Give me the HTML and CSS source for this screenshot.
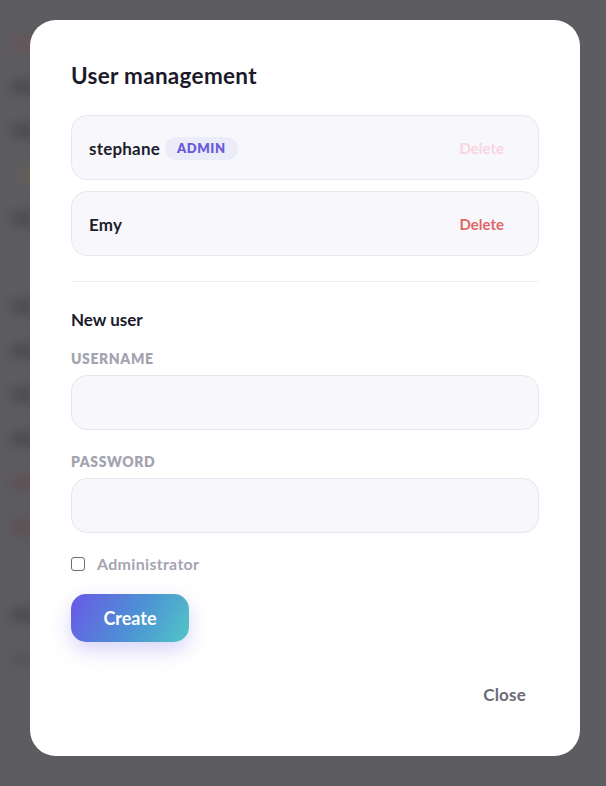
FILE: index.html
```html
<!DOCTYPE html>
<html>
<head>
<meta charset="utf-8">
<link rel="stylesheet" href="styles.css">
</head>
<body>
<div class="backdrop">
  <div class="bg-line bg-red"></div>
  <div class="bg-line bg-dark"></div>
  <div class="bg-line bg-short"></div>
  <div class="bg-line bg-amber"></div>
  <div class="bg-line bg-dark"></div>
  <div class="bg-line bg-gap"></div>
  <div class="bg-line bg-dark"></div>
  <div class="bg-line bg-dark"></div>
  <div class="bg-line bg-dark"></div>
  <div class="bg-line bg-dark"></div>
  <div class="bg-line bg-red2"></div>
  <div class="bg-line bg-red2"></div>
  <div class="bg-line bg-gap"></div>
  <div class="bg-line bg-dark"></div>
  <div class="bg-line bg-foot"></div>
</div>
<div class="overlay">
  <div class="modal">
    <h2 class="title">User management</h2>
    <div class="user-list">
      <div class="user-row">
        <div class="user-name">stephane <span class="badge">ADMIN</span></div>
        <button class="delete disabled">Delete</button>
      </div>
      <div class="user-row">
        <div class="user-name">Emy</div>
        <button class="delete">Delete</button>
      </div>
    </div>
    <div class="divider"></div>
    <h3 class="subtitle">New user</h3>
    <label class="field-label">USERNAME</label>
    <div class="input"></div>
    <label class="field-label">PASSWORD</label>
    <div class="input"></div>
    <label class="check-row"><span class="checkbox"></span>Administrator</label>
    <button class="create">Create</button>
    <div class="footer"><button class="close">Close</button></div>
  </div>
</div>
</body>
</html>
```
FILE: styles.css
```css
* { box-sizing: border-box; }
html, body { margin: 0; padding: 0; }
body {
  width: 606px;
  height: 786px;
  overflow: hidden;
  background: #5c5c61;
  font-family: Lato, "Noto Sans", sans-serif;
}
.backdrop {
  display: flex;
  flex-direction: column;
  gap: 30px;
  padding: 36px 0 0 10px;
  filter: blur(6px);
}
.bg-line { height: 14px; width: 50px; border-radius: 6px; background: #4b4b50; }
.bg-red { background: #685558; width: 40px; }
.bg-short { width: 30px; }
.bg-amber { background: #6a6151; width: 20px; margin-left: 12px; }
.bg-gap { background: transparent; }
.bg-red2 { background: #5f5054; }
.bg-foot { width: 250px; background: #55555a; }

.overlay {
  position: fixed;
  inset: 0;
  padding: 20px 26px 30px 30px;
}
.modal {
  width: 550px;
  height: 736px;
  background: #fff;
  border-radius: 26px;
  padding: 40px 41px 0 41px;
  display: flex;
  flex-direction: column;
}
.title {
  margin: 0;
  font-size: 22.5px;
  font-weight: 700;
  color: #1b1a2b;
  line-height: 32px;
  letter-spacing: 0.3px;
}
.user-list {
  margin-top: 23px;
  display: flex;
  flex-direction: column;
  gap: 11px;
}
.user-row {
  height: 65px;
  background: #f8f8fc;
  border: 1px solid #e7e7ef;
  border-radius: 16px;
  display: flex;
  align-items: center;
  justify-content: space-between;
  padding: 2px 20px 0 17px;
}
.user-name {
  font-size: 17px;
  font-weight: 700;
  color: #1e1d2c;
  display: flex;
  align-items: center;
  gap: 5px;
  letter-spacing: 0.2px;
}
.badge {
  background: #ececf9;
  color: #6a5bd9;
  font-size: 13px;
  font-weight: 800;
  letter-spacing: 0.6px;
  border-radius: 12px;
  padding: 4px 12px;
  line-height: 15px;
}
button {
  font-family: inherit;
  border: none;
  background: none;
  cursor: pointer;
}
.delete {
  font-size: 15px;
  font-weight: 700;
  color: #e06767;
  padding: 4px 14px 6px;
}
.delete.disabled { color: #f7d5de; }
.divider {
  height: 1px;
  background: #ededf2;
  margin-top: 25px;
}
.subtitle {
  margin: 26px 0 0;
  font-size: 17px;
  font-weight: 700;
  color: #1b1a2b;
  line-height: 24px;
}
.field-label {
  display: block;
  margin-top: 17px;
  font-size: 14px;
  font-weight: 800;
  color: #a3a3b0;
  letter-spacing: 0.6px;
  line-height: 20px;
}
.input {
  margin-top: 6px;
  height: 55px;
  background: #f8f8fc;
  border: 1px solid #e6e6ee;
  border-radius: 16px;
}
.field-label + .input + .field-label { margin-top: 22px; }
.check-row {
  margin-top: 20px;
  display: flex;
  align-items: center;
  gap: 12px;
  font-size: 16px;
  font-weight: 700;
  color: #a5a5b1;
  line-height: 22px;
  letter-spacing: 0.3px;
}
.checkbox {
  width: 14px;
  height: 14px;
  border: 1.5px solid #6c6c75;
  border-radius: 3px;
  background: #fff;
}
.create {
  margin-top: 19px;
  align-self: flex-start;
  width: 118px;
  height: 48px;
  border-radius: 15px;
  background: linear-gradient(120deg, #6a58e6 0%, #4c93d4 55%, #52c6c6 100%);
  color: #fff;
  font-size: 18px;
  font-weight: 700;
  box-shadow: 0 8px 20px rgba(110, 100, 230, 0.28);
}
.footer {
  margin-top: 36px;
  display: flex;
  justify-content: flex-end;
}
.close {
  font-size: 17px;
  font-weight: 700;
  color: #6b6b78;
  padding: 6px 13px;
  letter-spacing: 0.2px;
}
```
